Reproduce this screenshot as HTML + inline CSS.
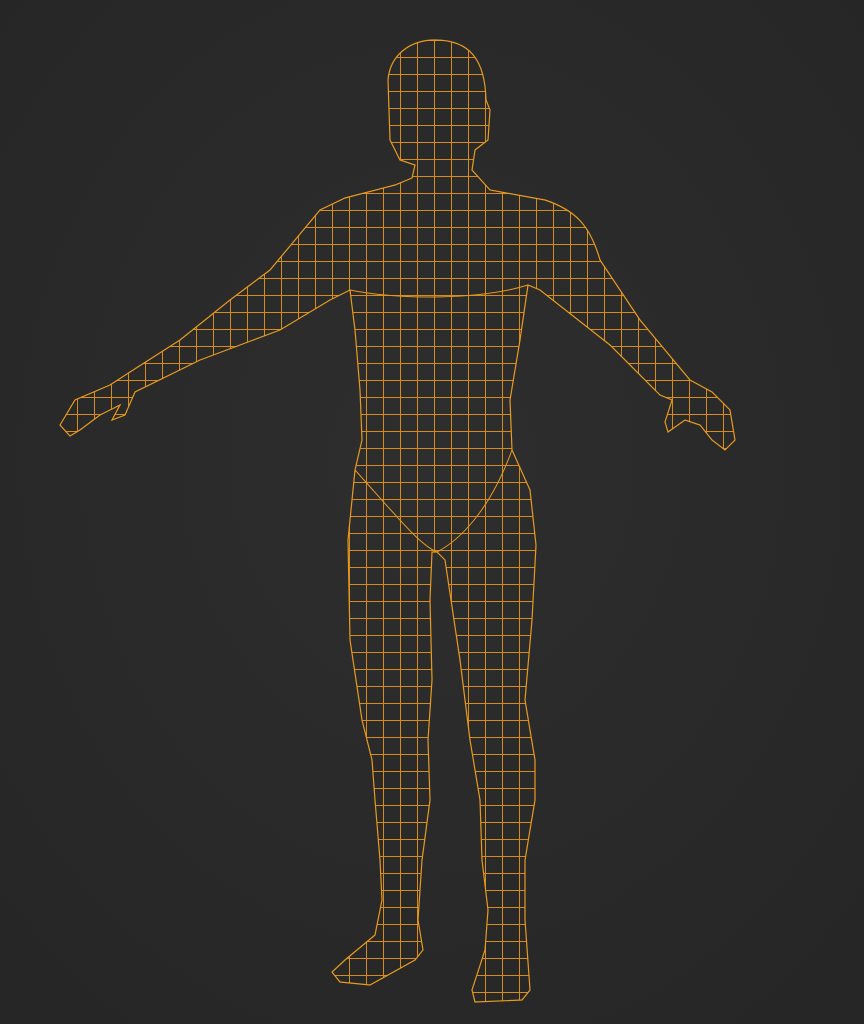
<!DOCTYPE html>
<html><head><meta charset="utf-8"><style>
html,body{margin:0;padding:0;width:864px;height:1024px;overflow:hidden;background:#2a2a2a}
svg{display:block}
</style></head><body>
<svg width="864" height="1024" viewBox="0 0 864 1024" xmlns="http://www.w3.org/2000/svg">
<defs>
<radialGradient id="bg" cx="50%" cy="45%" r="70%">
<stop offset="0" stop-color="#2e2e2e"/><stop offset="1" stop-color="#262626"/>
</radialGradient>
<clipPath id="body"><path d="M435,40 C470,40 485,60 486,100 L490,110 L488,140 L475,150 L472,170 L490,190 L545,200 C575,210 590,225 600,260 L640,320 L690,380 L712,392 L730,410 L735,440 L725,450 L712,440 L700,425 L685,420 L668,432 L665,422 L672,400 L660,395 L610,345 L540,290 L528,285 L520,340 L510,400 L512,450 L530,490 L536,545 L532,620 L525,700 L535,760 L535,800 L525,860 L525,920 L530,990 L522,1000 L475,1002 L472,990 L485,950 L488,910 L482,860 L480,800 L470,740 L460,660 L445,560 L437,552 L432,552 L430,600 L432,680 L428,740 L430,800 L422,860 L418,920 L423,950 L415,960 L370,985 L340,982 L332,972 L345,960 L375,935 L382,900 L380,860 L375,800 L372,760 L362,720 L350,640 L348,540 L355,470 L362,440 L360,390 L355,330 L350,290 L330,300 L280,330 L240,345 L200,360 L135,392 L125,415 L112,420 L120,405 L100,415 L80,430 L70,436 L60,425 L75,400 L110,385 L130,372 L180,340 L230,300 L270,270 L295,240 L320,210 L345,198 L395,185 L412,178 L415,165 L400,160 L390,140 L388,80 C390,55 410,40 435,40 Z"/></clipPath>
</defs>
<rect width="864" height="1024" fill="url(#bg)"/>
<g clip-path="url(#body)" fill="none" stroke="#d68c1a" stroke-width="1">
<path d="M0,40.5h864m-864,17h864m-864,17h864m-864,17h864m-864,17h864m-864,17h864m-864,17h864m-864,17h864m-864,17h864m-864,17h864m-864,17h864m-864,17h864m-864,17h864m-864,17h864m-864,17h864m-864,17h864m-864,17h864m-864,17h864m-864,17h864m-864,17h864m-864,17h864m-864,17h864m-864,17h864m-864,17h864m-864,17h864m-864,17h864m-864,17h864m-864,17h864m-864,17h864m-864,17h864m-864,17h864m-864,17h864m-864,17h864m-864,17h864m-864,17h864m-864,17h864m-864,17h864m-864,17h864m-864,17h864m-864,17h864m-864,17h864m-864,17h864m-864,17h864m-864,17h864m-864,17h864m-864,17h864m-864,17h864m-864,17h864m-864,17h864m-864,17h864m-864,17h864m-864,17h864m-864,17h864m-864,17h864m-864,17h864m-864,17h864m-864,17h864"/>
<path d="M60.5,0v1024m17,-1024v1024m17,-1024v1024m17,-1024v1024m17,-1024v1024m17,-1024v1024m17,-1024v1024m17,-1024v1024m17,-1024v1024m17,-1024v1024m17,-1024v1024m17,-1024v1024m17,-1024v1024m17,-1024v1024m17,-1024v1024m17,-1024v1024m17,-1024v1024m17,-1024v1024m17,-1024v1024m17,-1024v1024m17,-1024v1024m17,-1024v1024m17,-1024v1024m17,-1024v1024m17,-1024v1024m17,-1024v1024m17,-1024v1024m17,-1024v1024m17,-1024v1024m17,-1024v1024m17,-1024v1024m17,-1024v1024m17,-1024v1024m17,-1024v1024m17,-1024v1024m17,-1024v1024m17,-1024v1024m17,-1024v1024m17,-1024v1024m17,-1024v1024m17,-1024v1024"/>
</g>
<path d="M435,40 C470,40 485,60 486,100 L490,110 L488,140 L475,150 L472,170 L490,190 L545,200 C575,210 590,225 600,260 L640,320 L690,380 L712,392 L730,410 L735,440 L725,450 L712,440 L700,425 L685,420 L668,432 L665,422 L672,400 L660,395 L610,345 L540,290 L528,285 L520,340 L510,400 L512,450 L530,490 L536,545 L532,620 L525,700 L535,760 L535,800 L525,860 L525,920 L530,990 L522,1000 L475,1002 L472,990 L485,950 L488,910 L482,860 L480,800 L470,740 L460,660 L445,560 L437,552 L432,552 L430,600 L432,680 L428,740 L430,800 L422,860 L418,920 L423,950 L415,960 L370,985 L340,982 L332,972 L345,960 L375,935 L382,900 L380,860 L375,800 L372,760 L362,720 L350,640 L348,540 L355,470 L362,440 L360,390 L355,330 L350,290 L330,300 L280,330 L240,345 L200,360 L135,392 L125,415 L112,420 L120,405 L100,415 L80,430 L70,436 L60,425 L75,400 L110,385 L130,372 L180,340 L230,300 L270,270 L295,240 L320,210 L345,198 L395,185 L412,178 L415,165 L400,160 L390,140 L388,80 C390,55 410,40 435,40 Z" fill="none" stroke="#e89a1f" stroke-width="1.2"/>
<path d="M350,290 C400,300 480,300 528,285 M355,470 C400,520 420,545 437,552 C460,540 490,510 512,450" fill="none" stroke="#e89a1f" stroke-width="1"/>
</svg>
</body></html>
